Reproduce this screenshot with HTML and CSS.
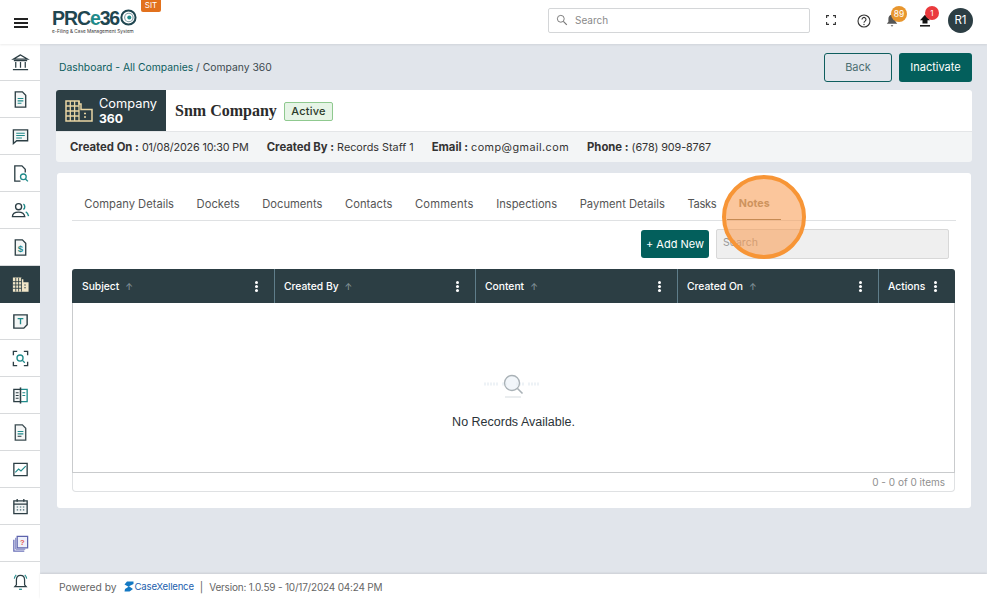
FILE: index.html
```html
<!DOCTYPE html>
<html lang="en">
<head>
<meta charset="utf-8">
<title>Company 360</title>
<link rel="stylesheet" href="styles.css">
</head>
<body>
<div class="app">
  <header class="topbar">
    <button class="burger" aria-label="Menu"><span></span><span></span><span></span></button>
    <div class="logo">
      <div class="logo-mark">PRC<em>e</em>36<svg class="logo-zero" viewBox="0 0 20 20"><circle cx="10" cy="10" r="8.4" fill="none" stroke="#1f4650" stroke-width="2.4"/><circle cx="10.5" cy="10" r="5" fill="none" stroke="#7f9ca3" stroke-width="1.3"/><circle cx="11" cy="10" r="2.4" fill="#1f8a8a"/></svg></div>
      <div class="logo-sub">e-Filing &amp; Case Management System</div>
    </div>
    <span class="sit">SIT</span>
    <div class="global-search">
      <svg viewBox="0 0 14 14" class="gs-icon"><circle cx="5.6" cy="5.6" r="4" fill="none" stroke="#777" stroke-width="1.1"/><path d="M8.6 8.6l4 4" stroke="#777" stroke-width="1.4"/></svg>
      <span>Search</span>
    </div>
    <div class="top-icons">
      <svg class="i-full" viewBox="0 0 10 10"><path d="M0.6 3V.6H3M7 .6h2.4V3M9.4 7v2.4H7M3 9.4H.6V7" fill="none" stroke="#333" stroke-width="1.1"/></svg>
      <svg class="i-help" viewBox="0 0 14 14"><circle cx="7" cy="7" r="6" fill="none" stroke="#333" stroke-width="1.1"/><path d="M5 5.4a2 2 0 1 1 3.1 1.7c-.7.5-1.1.8-1.1 1.6" fill="none" stroke="#333" stroke-width="1.1"/><circle cx="7" cy="10.5" r=".7" fill="#333"/></svg>
      <div class="i-bell">
        <svg viewBox="0 0 12 13"><path d="M6 .8c2.4 0 3.6 1.8 3.6 4v3l1.6 2H.8l1.6-2v-3C2.4 2.600 3.600.8 6 .8z" fill="#555"/><path d="M4.600 11.200h2.800L6 12.800z" fill="#555"/></svg>
        <span class="badge badge-orange">89</span>
      </div>
      <div class="i-upload">
        <svg viewBox="0 0 12 13"><path d="M6 .8l5 5.400H8.500v3.400h-5V6.200H1z" fill="#111"/><path d="M1 11.800h10" stroke="#111" stroke-width="1.500"/></svg>
        <span class="badge badge-red">1</span>
      </div>
      <span class="avatar">R1</span>
    </div>
  </header>

  <div class="body-row">
    <nav class="sidebar">
      <a class="nav-item"><svg viewBox="0 0 20 20"><path d="M10 2L2.500 6.500h15zM3 8h14M2 17.500h16M5 9.500v6M10 9.500v6M15 9.500v6" fill="none" stroke="#2c3e44" stroke-width="1.300"/></svg></a>
      <a class="nav-item"><svg viewBox="0 0 20 20"><path d="M4.500 2h7.500l3.500 3.500V18h-11z" fill="#f4f6f6" stroke="#2c3e44" stroke-width="1.400"/><path d="M7 9h6M7 11.500h6M7 14h4" stroke="#1f8a8a" stroke-width="1.200"/></svg></a>
      <a class="nav-item"><svg viewBox="0 0 20 20"><path d="M2.500 3h15v11.500H6L2.500 17.500z" fill="#f4f6f6" stroke="#2c3e44" stroke-width="1.400"/><path d="M5.500 6.500h9M5.500 9h9M5.500 11.500h6" stroke="#1f8a8a" stroke-width="1.100"/></svg></a>
      <a class="nav-item"><svg viewBox="0 0 20 20"><path d="M10 18H4V2h7.500L15 5.500V9" fill="none" stroke="#2c3e44" stroke-width="1.400"/><circle cx="13" cy="13.500" r="3" fill="none" stroke="#1f8a8a" stroke-width="1.400"/><path d="M15.200 15.700l2.600 2.600" stroke="#1f8a8a" stroke-width="1.400"/></svg></a>
      <a class="nav-item"><svg viewBox="0 0 20 20"><circle cx="8" cy="6" r="3.200" fill="none" stroke="#2c3e44" stroke-width="1.400"/><path d="M1.500 16.500c0-3.500 3-4.800 6.500-4.800s6 1.300 6.500 4.800z" fill="none" stroke="#2c3e44" stroke-width="1.400"/><path d="M13 3.200c2 .8 2 4.800 0 5.600M15.500 11.500c1.500.7 2.500 2.200 3 4.500" fill="none" stroke="#1f8a8a" stroke-width="1.500"/></svg></a>
      <a class="nav-item"><svg viewBox="0 0 20 20"><path d="M4.500 2h7.500l3.500 3.500V18h-11z" fill="#f4f6f6" stroke="#2c3e44" stroke-width="1.400"/><text x="10" y="15" class="dollar">$</text></svg></a>
      <a class="nav-item active"><svg viewBox="0 0 20 20"><path d="M2 2.500h9v2h2v3h5.500v10H2z" fill="#f1e6c8"/><path d="M2 7h9M2 10.500h9M2 14h9M5 3v14.500M8 3v14.500M11 3v14.500" stroke="#2c3e44" stroke-width=".9"/><path d="M14 10.500h1.500M14 13.500h1.500" stroke="#2c3e44" stroke-width="1.100"/></svg></a>
      <a class="nav-item"><svg viewBox="0 0 20 20"><path d="M3 3h14v10.500L13.500 17H3z" fill="#f4f6f6" stroke="#2c3e44" stroke-width="1.500"/><path d="M7 7h6M10 7v6" stroke="#1f8a8a" stroke-width="1.400"/></svg></a>
      <a class="nav-item"><svg viewBox="0 0 20 20"><path d="M2.500 6.500V2.500h4M13.500 2.500h4v4M17.500 13.500v4h-4M6.500 17.500h-4v-4" fill="none" stroke="#2c3e44" stroke-width="1.400"/><circle cx="9.500" cy="9.500" r="3.200" fill="none" stroke="#1f8a8a" stroke-width="1.400"/><path d="M12 12l2.500 2.500" stroke="#1f8a8a" stroke-width="1.400"/></svg></a>
      <a class="nav-item"><svg viewBox="0 0 20 20"><path d="M10 3.500H3v13h7" fill="#f4f6f6" stroke="#2c3e44" stroke-width="1.400"/><path d="M10 3.500h7v13h-7" fill="none" stroke="#1f8a8a" stroke-width="1.400"/><path d="M10 1.500v17" stroke="#2c3e44" stroke-width="1.600"/><path d="M5 7h3M5 10h3M5 13h3" stroke="#2c3e44" stroke-width="1.100"/><path d="M12 7h3M12 10h3" stroke="#1f8a8a" stroke-width="1.100"/></svg></a>
      <a class="nav-item"><svg viewBox="0 0 20 20"><path d="M4.500 2h7.500l3.500 3.500V18h-11z" fill="#f4f6f6" stroke="#3d4d52" stroke-width="1.400"/><path d="M7 9h6M7 11.500h6" stroke="#1f8a8a" stroke-width="1.200"/><path d="M7 14h4" stroke="#3d4d52" stroke-width="1.200"/></svg></a>
      <a class="nav-item"><svg viewBox="0 0 20 20"><path d="M3 3.500h14v13H3z" fill="#fff" stroke="#2c3e44" stroke-width="1.400"/><path d="M4.500 13l3.500-3.500 2.500 2 5-5" fill="none" stroke="#1f8a8a" stroke-width="1.200"/></svg></a>
      <a class="nav-item"><svg viewBox="0 0 20 20"><path d="M3 4h14v13.500H3z" fill="#f4f6f6" stroke="#2c3e44" stroke-width="1.400"/><path d="M3 7.500h14M6.500 2v3M13.500 2v3" stroke="#2c3e44" stroke-width="1.400"/><path d="M6 10.500h1.500M9.300 10.500h1.500M12.500 10.500H14M6 13.500h1.500M9.300 13.500h1.500M12.500 13.500H14" stroke="#3f6670" stroke-width="1.200"/></svg></a>
      <a class="nav-item"><svg viewBox="0 0 20 20"><path d="M3 6v12h11" fill="none" stroke="#6a70b8" stroke-width="1.400"/><path d="M5 4v12h10" fill="none" stroke="#6a70b8" stroke-width="1"/><path d="M6.500 2.500h11v12h-11z" fill="#eef0fa" stroke="#5d63ad" stroke-width="1.300"/><text x="12" y="11.500" class="qmark">?</text></svg></a>
      <a class="nav-item"><svg viewBox="0 0 20 20"><path d="M10 3.500c3 0 4.300 2.300 4.300 5v5l1.700 2H4l1.700-2v-5c0-2.700 1.300-5 4.300-5z" fill="none" stroke="#2c3e44" stroke-width="1.300"/><path d="M8.500 18.200h3" stroke="#1f8a8a" stroke-width="1.300"/><path d="M3.500 7c.2-1.600 1-3 2-4M16.500 7c-.2-1.600-1-3-2-4" fill="none" stroke="#1f8a8a" stroke-width="1.200"/></svg></a>
    </nav>

    <div class="content-col">
      <main class="main">
        <div class="crumb-row">
          <div class="crumbs"><a>Dashboard</a> - <a>All Companies</a> <span>/ Company 360</span></div>
          <div class="crumb-actions">
            <button class="btn btn-outline">Back</button>
            <button class="btn btn-solid btn-inactivate">Inactivate</button>
          </div>
        </div>

        <section class="company-card">
          <div class="company-head">
            <div class="company-tag">
              <svg viewBox="0 0 28 22"><path d="M1 1h13v3h2v5.500h11V21H1z" fill="none" stroke="#e8d5a3" stroke-width="1.500"/><path d="M1 6h13M1 11h13M1 16h13M5.300 1v20M9.600 1v20M14 1v20" stroke="#e8d5a3" stroke-width="1.300"/><path d="M19 13.500h2M19 17h2" stroke="#e8d5a3" stroke-width="1.500"/></svg>
              <div class="company-tag-text"><span>Company</span><strong>360</strong></div>
            </div>
            <h1 class="company-name">Snm Company</h1>
            <span class="status">Active</span>
          </div>
          <div class="company-info">
            <span><b>Created On :</b> <span class="val-date">01/08/2026 10:30 PM</span></span>
            <span><b>Created By :</b> <span>Records Staff 1</span></span>
            <span><b>Email :</b> <span class="val-mail">comp@gmail.com</span></span>
            <span><b>Phone :</b> <span class="val-tel">(678) 909-8767</span></span>
          </div>
        </section>

        <section class="panel">
          <div class="tabs">
            <a class="tab">Company Details</a>
            <a class="tab">Dockets</a>
            <a class="tab">Documents</a>
            <a class="tab">Contacts</a>
            <a class="tab tab-comments">Comments</a>
            <a class="tab">Inspections</a>
            <a class="tab">Payment Details</a>
            <a class="tab tab-tasks">Tasks</a>
            <a class="tab tab-active">Notes</a>
            <span class="spot"></span>
          </div>
          <div class="toolbar">
            <button class="btn btn-solid btn-add">+ Add New</button>
            <div class="tool-search">Search</div>
          </div>
          <div class="grid">
            <div class="grid-head">
              <div class="col"><span>Subject</span><i class="arrow">↑</i><b class="kebab"></b></div>
              <div class="col"><span>Created By</span><i class="arrow">↑</i><b class="kebab"></b></div>
              <div class="col"><span>Content</span><i class="arrow">↑</i><b class="kebab"></b></div>
              <div class="col"><span>Created On</span><i class="arrow">↑</i><b class="kebab"></b></div>
              <div class="col col-a"><span>Actions</span><b class="kebab"></b></div>
            </div>
            <div class="grid-body">
              <svg class="empty-icon" viewBox="0 0 60 30"><path d="M2 13h14M20 13h6M34 13h8M46 13h12" stroke="#edf2f6" stroke-width="3" stroke-dasharray="2 1"/><circle cx="30" cy="12" r="7.500" fill="#e9f0f6" fill-opacity=".6" stroke="#a9b1b6" stroke-width="1.300"/><path d="M35.500 17.500l5 5" stroke="#a9b1b6" stroke-width="1.600"/><path d="M23 26h16" stroke="#d5dbdf" stroke-width="1"/></svg>
              <p class="empty-text">No Records Available.</p>
            </div>
            <div class="grid-foot">0 - 0 of 0 items</div>
          </div>
        </section>
      </main>
      <footer class="footer">
        <span>Powered by</span>
        <span class="cx"><svg viewBox="0 0 10 11"><path d="M9.500.5H3L.5 3.500 4.500 5.800 1 8l-.5 2.500h5L9 8 5 5.200 9.500 3z" fill="#1479c4"/></svg><span class="cx-name">CaseXellence</span></span>
        <span class="sep">|</span>
        <span class="version">Version: 1.0.59 - 10/17/2024 04:24 PM</span>
      </footer>
    </div>
  </div>
</div>
</body>
</html>
```
FILE: styles.css
```css
* { box-sizing: border-box; }
html, body { margin: 0; padding: 0; height: 100%; overflow: hidden; }
body { font-family: Inter, "Liberation Sans", sans-serif; font-size: 11px; color: #333; background: #fff; }
button { font-family: inherit; }
.app { display: flex; flex-direction: column; width: 987px; height: 599px; }

/* top bar */
.topbar { height: 44px; flex: none; display: flex; align-items: center; background: #fff; box-shadow: 0 1px 2px rgba(0,0,0,.08); position: relative; z-index: 2; padding-left: 14px; }
.burger { width: 14px; height: 10px; padding: 0; border: 0; background: none; display: flex; flex-direction: column; justify-content: space-between; margin-top: 1px; }
.burger span { height: 2px; background: #222; display: block; }
.logo { margin-left: 25px; width: 84px; margin-bottom: 1px; }
.logo-mark { font-family: "Liberation Sans", sans-serif; font-weight: 700; font-size: 19.500px; line-height: 16px; letter-spacing: -1.100px; color: #1f4650; display: flex; align-items: center; white-space: nowrap; margin-left: -1px; }
.logo-mark em { font-style: normal; color: #1f8a8a; }
.logo-zero { width: 17px; height: 17px; margin-left: 1px; }
.logo-sub { font-size: 4.700px; line-height: 6px; margin: 2px 0 0 -1px; color: #333; white-space: nowrap; }
.sit { align-self: flex-start; margin-left: 4px; width: 20px; height: 12px; background: #e2711d; color: #fff; font-size: 8px; line-height: 11px; text-align: center; border-radius: 0 0 2px 2px; }
.global-search { margin-left: 387px; margin-bottom: 3px; width: 262px; height: 25px; border: 1px solid #d4d6d8; border-radius: 2px; display: flex; align-items: center; padding: 0 0 2px 7px; color: #8a8a8a; font-size: 10px; }
.gs-icon { width: 12px; height: 12px; margin-right: 7px; }
.top-icons { margin-left: 16px; margin-bottom: 3px; display: flex; align-items: center; }
.i-full { width: 10px; height: 10px; margin-bottom: 2px; }
.i-help { width: 14px; height: 14px; margin-left: 21px; }
.i-bell, .i-upload { position: relative; width: 12px; height: 13px; }
.i-bell svg, .i-upload svg { width: 12px; height: 13px; display: block; }
.i-bell { margin-left: 15px; }
.i-upload { margin-left: 21px; }
.badge { position: absolute; border-radius: 50%; color: #fff; text-align: center; }
.badge-orange { width: 16px; height: 16px; top: -8px; left: 5px; background: #e8962e; font-size: 8.500px; line-height: 16px; }
.badge-red { width: 14px; height: 14px; top: -8px; left: 6px; background: #ea3a3d; font-size: 8px; line-height: 14px; }
.avatar { width: 25px; height: 25px; margin-left: 17px; border-radius: 50%; background: #2c3e44; color: #fff; font-size: 11.500px; line-height: 25px; text-align: center; }

/* layout */
.body-row { flex: 1; display: flex; min-height: 0; }
.sidebar { width: 40px; flex: none; background: #fff; display: flex; flex-direction: column; }
.nav-item { height: 37px; flex: none; display: flex; align-items: center; justify-content: center; padding-top: 1px; border-bottom: 1px solid #d8dadc; }
.nav-item svg { width: 19px; height: 19px; }
.nav-item:last-child { border-bottom: 0; }
.nav-item.active { background: #2c3e44; border-bottom-color: #2c3e44; }
.dollar { font-size: 10px; font-weight: 700; fill: #1f8a8a; text-anchor: middle; font-family: "Liberation Sans", sans-serif; }
.qmark { font-size: 8px; font-weight: 700; fill: #e4574f; text-anchor: middle; font-family: "Liberation Sans", sans-serif; }
.content-col { flex: 1; display: flex; flex-direction: column; min-width: 0; }
.main { flex: 1; background: #e1e5eb; padding: 9px 15px 0 16px; }

/* breadcrumb row */
.crumb-row { display: flex; justify-content: space-between; align-items: center; height: 29px; margin-bottom: 8px; padding-left: 3px; }
.crumbs { font-size: 10.350px; color: #0e5e5e; margin-bottom: 2px; }
.crumbs span { color: #3d4a4f; }
.crumb-actions { display: flex; gap: 7px; }
.btn { height: 29px; border-radius: 3px; font-size: 11px; padding: 0 0 1px; cursor: pointer; }
.btn-outline { width: 68px; background: transparent; border: 1px solid #0e5e5e; color: #4d6f72; }
.btn-solid { background: #035f5c; border: 0; color: #fff; }
.btn-inactivate { width: 73px; }

/* company card */
.company-card { border-radius: 3px; overflow: hidden; }
.company-head { height: 41px; background: #fff; display: flex; align-items: center; }
.company-tag { width: 110px; height: 41px; background: #2c3e44; display: flex; align-items: center; padding-left: 9px; color: #fff; }
.company-tag svg { width: 28px; height: 22px; margin-right: 6px; }
.company-tag-text { display: flex; flex-direction: column; font-size: 12.800px; line-height: 15px; }
.company-tag-text strong { font-size: 12.200px; }
.company-name { margin: 0 0 0 9px; width: 100px; font-family: "Liberation Serif", serif; font-size: 16px; font-weight: 700; color: #2b2b2b; white-space: nowrap; }
.status { margin-left: 9px; margin-top: 1px; width: 49px; height: 19px; background: #e6f4e6; border: 1px solid #8fc98f; border-radius: 2px; font-size: 11px; font-weight: 500; line-height: 17px; letter-spacing: .2px; text-align: center; color: #2b3a2b; }
.company-info { height: 31px; background: #f3f5f6; display: flex; align-items: center; gap: 18px; padding-left: 14px; font-size: 10.800px; color: #333; border-top: 1px solid #e4e6e8; }
.company-info b { font-weight: 700; font-size: 11.300px; }
.val-date { letter-spacing: -.15px; }
.val-mail { letter-spacing: .45px; }
.val-tel { letter-spacing: -.1px; }

/* panel */
.panel { margin: 11px 1px 0; height: 335px; padding: 15px 15px 16px; background: #fff; border-radius: 3px; }
.tabs { position: relative; height: 33px; display: flex; padding-left: 1px; border-bottom: 1px solid #dfe1e3; }
.tab { padding: 0 11.300px; height: 32px; line-height: 32px; font-size: 11.200px; color: #555; white-space: nowrap; }
.tab-comments { letter-spacing: .2px; }
.tab-tasks { letter-spacing: -.4px; }
.tab-active { font-weight: 700; font-size: 10.700px; color: #8c8064; border-bottom: 1px solid #7a6a4a; }
.spot { position: absolute; left: 650px; top: -13px; width: 84px; height: 84px; border: 4px solid #f79536; border-radius: 50%; background: rgba(248,160,90,.6); z-index: 3; }
.toolbar { height: 48px; display: flex; justify-content: flex-end; align-items: center; gap: 7px; padding: 0 7px 2px 0; }
.btn-add { width: 68px; height: 28px; font-size: 11px; }
.tool-search { width: 233px; height: 30px; background: #efefef; border: 1px solid #d8d8d8; border-radius: 2px; padding-left: 6px; line-height: 26px; font-size: 10.500px; color: #999; }

/* grid */
.grid { margin-right: 1px; }
.grid-head { height: 34px; background: #2c3e44; display: grid; grid-template-columns: 202px 201px 202px 201px 1fr; color: #fff; border-radius: 3px 3px 0 0; }
.col { display: flex; align-items: center; padding-left: 9px; font-size: 10.300px; font-weight: 500; border-left: 1px solid #5f7d8a; position: relative; }
.col:first-child { border-left: 0; padding-left: 10px; }
.arrow { font-style: normal; color: #84949a; font-size: 9px; margin-left: 6px; }
.kebab { position: absolute; right: 16px; top: 12px; width: 3px; height: 3px; border-radius: 50%; background: #fff; box-shadow: 0 4px 0 #fff, 0 8px 0 #fff; }
.col-a .kebab { right: 18px; }
.grid-body { height: 170px; border: 1px solid #c9cbcd; border-top: 0; display: flex; flex-direction: column; align-items: center; padding-top: 68px; }
.empty-icon { width: 60px; height: 30px; display: block; margin-right: 4px; }
.empty-text { margin: 14px 0 0; font-family: "Liberation Sans", sans-serif; font-size: 12.500px; color: #2b3338; }
.grid-foot { height: 19px; border: 1px solid #dfe1e3; border-top: 0; border-radius: 0 0 4px 4px; text-align: right; padding-right: 9px; font-size: 10px; line-height: 18px; color: #8f8f8f; }

/* footer */
.footer { height: 25px; flex: none; background: #fff; display: flex; align-items: center; padding-left: 19px; font-size: 10.300px; color: #666; box-shadow: 0 -1px 2px rgba(0,0,0,.1); position: relative; }
.cx { display: flex; align-items: center; margin-left: 7px; }
.cx svg { width: 10px; height: 11px; margin-right: 1px; }
.cx-name { color: #1c5fae; font-size: 9.600px; letter-spacing: -.2px; }
.sep { margin: 0 6px; }
.version { font-size: 10px; letter-spacing: -.2px; }
```
